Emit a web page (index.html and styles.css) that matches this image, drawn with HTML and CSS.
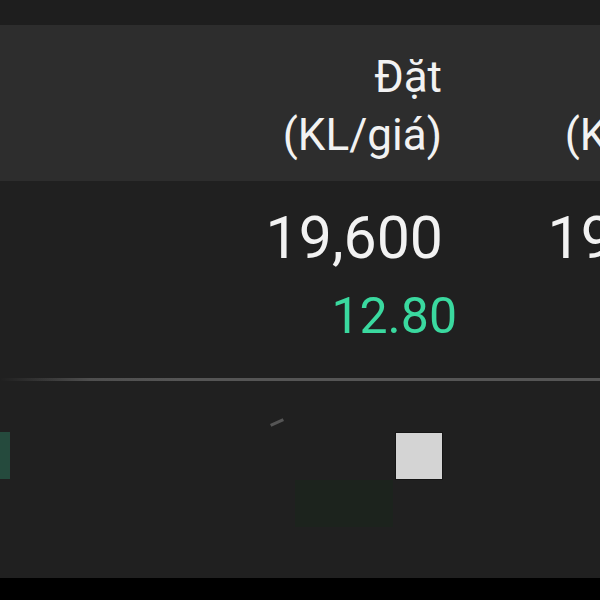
FILE: index.html
```html
<!DOCTYPE html>
<html lang="vi">
<head>
    <meta charset="UTF-8">
    <meta name="viewport" content="width=device-width, initial-scale=1.0">
    <title>Bảng giá</title>
    <link rel="stylesheet" href="styles.css">
</head>
<body>
    <div class="status-bar"></div>

    <!-- Header of the order book -->
    <div class="table-head">
        <div class="cell label"></div>
        <div class="cell head-text">Đặt<br>(KL/giá)</div>
        <div class="cell head-text">Đặt<br>(KL/giá)</div>
    </div>

    <!-- Best bid row -->
    <div class="table-row">
        <div class="cell label"></div>
        <div class="cell">
            <div class="volume">19,600</div>
            <div class="price up">12.80</div>
        </div>
        <div class="cell">
            <div class="volume">19,650</div>
            <div class="price up">112.8</div>
        </div>
    </div>

    <div class="divider"></div>

    <!-- Mini chart under the table -->
    <div class="chart">
        <div class="candle green-edge"></div>
        <div class="candle dark-green"></div>
        <div class="candle white"></div>
        <div class="tick"></div>
    </div>

    <div class="nav-bar"></div>
</body>
</html>
```

FILE: styles.css
```css
body {
    margin: 0;
    width: 600px;
    height: 600px;
    overflow: hidden;
    background-color: #202020;
    color: #f2f2f2;
    font-family: Roboto, "Noto Sans", sans-serif;
    display: flex;
    flex-direction: column;
}

.status-bar {
    height: 25px;
    background-color: #1e1e1e;
    flex-shrink: 0;
}

.table-head,
.table-row {
    display: flex;
    flex-shrink: 0;
}

.table-head {
    height: 156px;
    padding-top: 6px;
    box-sizing: border-box;
    align-items: center;
    background-color: #2d2d2d;
}

.table-row {
    height: 197px;
    padding-top: 22px;
    box-sizing: border-box;
}

.cell {
    width: 282px;
    flex-shrink: 0;
    text-align: right;
}

.cell.label {
    width: 175px;
}

.head-text {
    font-size: 44px;
    line-height: 58px;
    padding-right: 15px;
    box-sizing: border-box;
}

.volume {
    font-size: 59px;
    line-height: 70px;
    padding-right: 14px;
}

.price {
    font-size: 50px;
    line-height: 60px;
    margin-top: 13px;
}

.price.up {
    color: #3ad99f;
}

/* thin line between the table and the chart */
.divider {
    height: 3px;
    flex-shrink: 0;
    background: linear-gradient(to right, rgba(85, 85, 85, 0) 0, #4e4e4e 90px, #555 180px, #555 100%);
}

.chart {
    position: relative;
    height: 197px;
    flex-shrink: 0;
}

.candle {
    position: absolute;
}

.green-edge {
    left: 0;
    top: 51px;
    width: 10px;
    height: 47px;
    background-color: #254a3d;
}

.dark-green {
    left: 295px;
    top: 99px;
    width: 98px;
    height: 47px;
    background-color: #1c231d;
}

.white {
    left: 395px;
    top: 51px;
    width: 46px;
    height: 46px;
    background-color: #d4d4d4;
    border: 1px solid #151515;
}

.tick {
    position: absolute;
    left: 270px;
    top: 40px;
    width: 14px;
    height: 3px;
    background-color: #555;
    transform: rotate(-25deg);
}

.nav-bar {
    flex: 1;
    background-color: #000;
}
```
